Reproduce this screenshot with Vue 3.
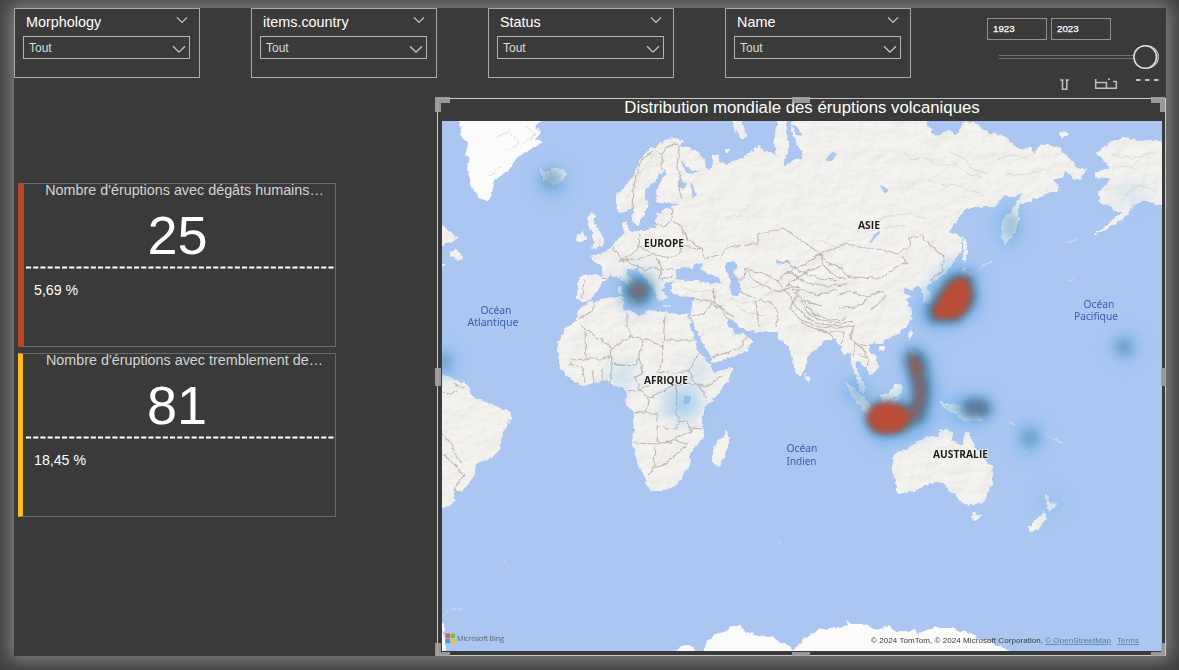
<script setup>
const slicers = ['Morphology', 'items.country', 'Status', 'Name']
const cards = [
  { title: "Nombre d'éruptions avec dégâts humains…", value: '25', pct: '5,69 %', tone: 'red' },
  { title: "Nombre d'éruptions avec tremblement de…", value: '81', pct: '18,45 %', tone: 'gold' },
]
const grips = ['tl', 't', 'tr', 'l', 'r', 'bl', 'b', 'br']

const land = [
  // Eurasia
  'M675 138L683 141 679 146 688 148 698 152 703 158 706 166 703 170 693 170 686 165 681 160 683 168 689 174 698 172 702 167 710 172 713 164 712 156 717 154 720 162 727 165 731 162 740 159 750 153 759 145 764 153 771 152 776 156 774 140 778 119L787 119 786 135 789 148 782 166 789 164 796 158 803 153 797 143 791 130 793 119L926 119 931 132 937 137 942 133 950 130 955 136 959 132 963 123 973 122 980 127 990 133 999 135 1008 138 1012 145 1023 150 1030 148 1035 153 1040 145 1053 145 1062 151 1067 155 1074 163 1077 168 1087 168 1083 175 1079 179 1073 178 1065 170 1063 177 1052 180 1057 184 1059 190 1047 193 1038 197 1033 200 1023 203 1018 207 1019 218 1015 232 1005 245 1001 233 1002 222 1010 212 1020 198 1023 192 1013 197 1003 196 997 205 977 208 967 208 958 218 948 232 957 235 962 238 962 248 953 263 945 273 937 279 927 287 932 297 930 303 924 303 923 292 920 286 915 287 912 291 905 288 902 294 912 296 905 300 908 305 912 310 912 318 905 328 897 335 883 340 881 344 873 343 868 347 873 355 878 362 878 368 870 375 867 368 862 365 859 360 856 363 857 371 863 380 865 393 860 390 857 380 852 365 850 353 843 355 841 347 835 338 830 340 825 340 815 350 807 357 805 368 800 376 795 370 792 357 789 347 783 342 778 338 779 332 760 332 747 330 740 328 732 320 725 317 728 324 732 330 737 335 743 333 747 336 753 342 745 352 730 357 713 363 711 355 703 343 693 323 690 316 693 305 694 298 683 297 672 293 671 285 675 281 665 283 662 290 667 297 660 302 655 292 648 282 637 268 628 269 626 273 633 281 644 289 641 293 639 298 634 291 626 283 618 277 610 276 602 282 597 290 590 300 582 303 577 298 579 277 590 275 603 276 602 267 590 257 597 255 605 252 613 245 620 238 625 232 622 225 627 221 628 232 645 231 655 228 657 215 663 210 672 207 680 204 668 203 658 203 656 195 660 182 667 174 666 170 659 174 655 181 645 190 645 200 648 206 643 215 638 225 633 222 632 208 625 213 617 210 616 195 625 187 634 175 640 160 648 150 658 145 666 140Z',
  // Africa
  'M593 303L607 298 622 297 624 303 622 308 627 311 643 316 648 310 663 312 677 314 687 314 691 322 689 324 695 340 697 350 710 365 713 372 732 368 730 378 717 395 705 407 702 420 704 437 697 445 690 453 690 463 680 480 670 489 652 492 647 483 638 463 632 443 634 430 634 413 625 403 627 392 622 387 613 385 607 380 595 382 583 386 568 377 559 365 559 357 558 343 567 327 577 320 578 310 590 302Z',
  // South America
  'M438 373L450 377 458 381 467 385 473 398 483 400 493 405 510 412 511 418 502 433 500 450 493 457 477 463 473 477 462 492 453 489 455 500 450 506 438 507Z',
  // Australia and Tasmania
  'M893 455L905 450 920 440 928 436 937 437 942 429 953 433 951 440 962 446 966 430 973 443 978 453 986 460 992 467 993 482 983 503 970 505 960 502 955 493 950 492 945 483 930 483 917 490 898 494 897 487 892 467ZM972 513L981 515 977 521 973 520Z',
  // Alaska
  'M1166 142L1148 140 1140 141 1123 137 1110 143 1097 153 1103 160 1110 168 1095 172 1095 178 1110 179 1104 187 1098 193 1100 202 1115 210 1123 212 1110 223 1092 236 1112 226 1128 214 1133 205 1147 200 1155 204 1166 205Z',
  // British Isles
  'M589 213L595 215 593 221 598 228 604 240 603 245 591 249 595 242 592 239 594 232 588 226ZM577 235L584 231 586 238 583 242 576 242Z',
  // Labrador, Newfoundland
  'M438 220L450 232 457 238 452 242 438 246ZM450 253L456 249 463 258 458 260 451 257ZM438 262L446 264 438 268Z',
  // Iceland, Svalbard, Novaya Zemlya, Wrangel
  'M540 169L545 172 553 169 563 170 566 175 562 181 552 184 544 180ZM733 119L742 119 744 130 747 138 742 139 736 132ZM725 149L729 149 728 152 725 152ZM1059 134L1065 131 1068 135 1062 137Z',
  // Mediterranean islands
  'M628 297L638 297 635 302ZM618 286L622 286 622 294 618 293ZM662 306L670 307 665 308Z',
  // Madagascar, Sri Lanka
  'M727 431L730 439 724 457 719 466 713 462 713 452 716 441 723 438ZM805 374L811 379 808 383 805 380Z',
  // Japan, Sakhalin, Hainan, Taiwan
  'M964 236L967 246 966 263 963 259 963 247ZM963 268L973 274 967 280 961 278ZM961 282L967 289 963 303 948 307 936 312 935 306 948 299 958 293ZM879 346L884 346 883 350 880 350ZM911 331L913 334 909 340 908 336Z',
  // Sumatra, Java, Borneo, Sulawesi, Philippines
  'M845 383L851 386 866 399 876 411 875 419 865 412 852 396ZM876 421L892 425 907 428 899 430 882 426ZM881 395L889 393 896 383 902 386 899 398 895 406 885 409ZM906 399L917 395 912 402 916 413 908 408 905 414ZM911 350L916 352 919 363 914 365ZM920 369L928 378 923 384 917 377Z',
  // New Guinea
  'M940 401L947 404 953 404 966 406 976 412 984 422 974 420 963 422 952 411 942 407Z',
  // New Zealand
  'M1045 494L1050 502 1057 504 1050 512 1047 508ZM1044 512L1047 515 1040 527 1032 532 1028 528 1035 521Z',
]

const ice =
  'M459 117L462 139 468 143 465 156 470 158 467 169 472 187 478 197 488 202 491 196 495 180 503 175 510 168 520 155 531 149 543 142 535 139 541 133 534 128 543 117ZM438 616L445 626 443 633 446 642 444 654 438 654ZM702 654L707 641 717 634 726 631 731 626 741 626 744 631 758 635 774 638 780 642 791 648 792 656 702 656ZM675 651L684 644 693 647 697 656 673 656ZM788 656L803 640 818 629 831 629 847 625 848 619 852 624 866 624 878 630 889 625 896 632 914 630 918 633 934 628 951 628 971 634 983 640 1000 646 1014 654Z'

const waters =
  'M676 278L677 270 683 267 693 268 695 264 704 263 700 269 713 275 723 282 712 284 700 281 688 281ZM725 263L734 261 738 267 733 272 740 282 740 294 734 296 729 289 731 280 725 271ZM871 242L879 234 880 230 874 235 868 243ZM679 179L686 184 685 189 679 187ZM694 187L697 195 693 198 689 184ZM776 262L790 260 790 262 777 264ZM825 160L833 151 837 153 829 162ZM880 186L889 190 885 194ZM791 145L795 151 803 156 797 160 789 154ZM790 124L797 127 802 135 796 134ZM684 397L691 396 690 404 683 404Z'

const borders = [
  'M641 160L637 172 633 187 632 210M641 160L654 151 662 153 667 147 676 143 680 150 677 165 681 178 679 190 682 198M662 153L662 170M672 208L671 221 663 227 654 223M671 221L681 226 687 240M640 233L639 247 635 252 620 261M612 248L619 255 624 261 640 259 652 254 665 257 676 257 683 246 702 249 704 257M639 247L650 252M624 261L637 266 645 270 652 267 660 269 675 270M657 258L662 271 660 280M662 280L673 276M682 229L688 239 703 250M584 280L582 298M603 277L616 279',
  'M704 259L722 254 727 247 757 244 758 235 783 228 798 238 812 247 820 254 806 263 788 272 778 281 763 273 745 269 744 279 730 279M820 254L845 244 866 247 883 250 897 255 909 246 910 237 922 236 931 246 945 257 942 270 930 281M820 254L827 262 843 269 849 277 881 278 892 270 907 263 902 256M820 254L823 265 836 277 846 278M745 269L755 281 777 291 790 288 801 291M777 281L785 289 791 282 810 270 822 266M740 292L754 297 757 308 759 327M759 300L771 302 779 314 776 328M712 289L716 302 724 314M690 299L706 300 716 303 733 317M692 316L705 312 712 303 720 309 728 319M712 357L729 352 741 347 746 338',
  'M800 289L790 308 801 320 819 327 838 328 854 325 850 338 858 345 872 346M801 322L813 329 829 332 835 340M829 332L845 332 841 344M849 334L855 343 853 356M858 345L866 352 869 365M857 355L868 358',
  'M579 319L592 311 596 303M580 325L607 344 612 348 632 336 627 325 627 311M585 332L586 359 570 360M632 336L643 339 663 346 665 314M665 340L694 340M643 339L639 357 635 366 612 364 611 348M586 359L603 359 612 354M663 346L662 364 658 371 675 373 690 370 698 355M639 357L643 372 635 378 640 389 658 381 672 382M612 364L610 382M602 368L604 383M592 369L594 384M569 364L582 367 585 384M614 365L635 366M627 392L641 390 649 398 646 410 635 413M649 398L676 384 688 383 701 387 706 397M676 384L677 397 676 410 680 421 675 429 658 426 657 413 634 413M633 443L659 444 673 440 684 434 692 432 688 422 676 421M658 426L658 443 673 442M655 446L654 466 648 475M654 468L666 463 679 452 687 444 672 440M690 370L694 383 706 387 722 376M702 428L690 427',
  'M459 493L454 488 464 475 456 466 442 453M442 433L450 441 453 451 462 463M453 384L459 388 466 386M442 391L449 394 458 390',
  'M883 406L891 399 901 395',
]

const relief = [
  'M786 260L799 271 815 277 837 281M788 270L803 282 822 286 847 285M799 300L807 312 821 321 842 323 852 321M802 300L814 314 830 320 846 319M785 285L800 288 818 295 837 290M835 296L850 291 867 297 883 291M840 308L857 307 868 300M870 310L880 303 886 294M784 288L795 305 807 318 820 324 842 326M792 290L806 301 821 306',
  'M730 298L744 304 758 302 767 294 781 289M736 305L749 314 765 315M680 286L695 291 710 290 720 295M747 289L760 286 771 279M725 218L739 215 750 205',
  'M925 158L939 165 955 165 969 174 982 178M927 180L944 185 960 186 982 195M950 152L963 157 972 169 989 174M995 160L1010 155 1026 159M1003 176L1026 174 1045 169M866 228L885 217 906 214 925 218M872 231L890 226 905 226M820 240L835 247 850 240M902 151L911 159 920 158M1115 165L1131 167 1142 158M1125 195L1140 185 1158 193M1112 155L1132 158 1154 153',
  'M497 137L510 131 519 143 507 151M490 177L502 165M526 126L536 135 523 143M625 198L633 188 640 173 655 154M944 407L958 409 974 416',
]

const labels = [
  { t: 'EUROPE', x: 644, y: 247, w: 40, c: 'cont' },
  { t: 'ASIE', x: 858, y: 229, w: 22, c: 'cont' },
  { t: 'AFRIQUE', x: 644, y: 384, w: 44, c: 'cont' },
  { t: 'AUSTRALIE', x: 933, y: 458, w: 55, c: 'cont' },
  { t: 'Océan', x: 480.5, y: 313.5, w: 31, c: 'sea' },
  { t: 'Atlantique', x: 467.5, y: 325.5, w: 51, c: 'sea' },
  { t: 'Océan', x: 786.5, y: 452, w: 31, c: 'sea' },
  { t: 'Indien', x: 786.5, y: 464.5, w: 30, c: 'sea' },
  { t: 'Océan', x: 1083.5, y: 308, w: 31, c: 'sea' },
  { t: 'Pacifique', x: 1074, y: 320, w: 44, c: 'sea' },
]
</script>

<template>
  <main class="screen">
    <section class="report">
      <header class="filters">
        <div v-for="name in slicers" :key="name" class="slicer">
          <div class="slicer-head">
            <span>{{ name }}</span>
            <svg width="12" height="8" viewBox="0 0 12 8"><path d="M1 1.4L6 6.4L11 1.4" /></svg>
          </div>
          <div class="select">
            <span>Tout</span>
            <svg width="14" height="9" viewBox="0 0 14 9"><path d="M1 1.2L7 7.2L13 1.2" /></svg>
          </div>
        </div>
        <div class="dates">
          <div class="years"><span>1923</span><span>2023</span></div>
          <svg class="slider" width="164" height="28" viewBox="0 0 164 28">
            <path d="M3 12.5H137M3 15.5H137" stroke="#707070" />
            <circle cx="151.2" cy="14" r="11.2" fill="#3a3a3a" stroke="#b8b8b8" stroke-width="1.2" />
            <circle cx="149.2" cy="14" r="11.3" fill="#3a3a3a" stroke="#dedede" stroke-width="1.6" />
          </svg>
        </div>
      </header>

      <div class="content">
        <aside class="cards">
          <article v-for="c in cards" :key="c.value" class="card" :class="c.tone">
            <h2>{{ c.title }}</h2>
            <div class="value">{{ c.value }}</div>
            <svg class="dash" width="310" height="3" viewBox="0 0 310 3">
              <path d="M2 1.5H310" stroke="#fff" stroke-width="2" stroke-dasharray="5.1 2.1" />
            </svg>
            <div class="pct">{{ c.pct }}</div>
          </article>
        </aside>

        <div class="visual">
          <div class="tools">
            <svg width="106" height="12" viewBox="0 0 106 12" fill="none" stroke="#c0c0c0">
              <path d="M6 2H9.5M11.5 2H15M8.5 1.5V11.2H12.8V1.5" stroke-width="1.6" />
              <path d="M41.7 1V10.2H62.3V3M42 4.5H52.5V10M54 1.2H56M59 3.5H62.5" stroke-width="1.5" />
              <path d="M82 2H86.5M91 2H95.5M100 2H104.5" stroke-width="2" />
            </svg>
          </div>
          <div class="frame">
            <h1>Distribution mondiale des éruptions volcaniques</h1>
            <svg class="map" width="720" height="530" viewBox="442 121 720 530">
              <defs>
                <filter id="coast" x="438" y="117" width="730" height="542" filterUnits="userSpaceOnUse">
                  <feTurbulence type="fractalNoise" baseFrequency=".22" numOctaves="2" seed="4" result="n" />
                  <feDisplacementMap in="SourceGraphic" in2="n" scale="5" xChannelSelector="R" yChannelSelector="G" result="shape" />
                  <feTurbulence type="fractalNoise" baseFrequency=".045 .07" numOctaves="4" seed="9" result="h" />
                  <feDiffuseLighting in="h" surfaceScale=".8" diffuseConstant="1.13" lighting-color="#fff" result="lit">
                    <feDistantLight azimuth="225" elevation="60" />
                  </feDiffuseLighting>
                  <feComposite in="lit" in2="shape" operator="in" result="shade" />
                  <feBlend in="shape" in2="shade" mode="multiply" />
                </filter>
                <filter id="jitter" x="438" y="117" width="730" height="542" filterUnits="userSpaceOnUse">
                  <feTurbulence type="fractalNoise" baseFrequency=".16" numOctaves="2" seed="7" />
                  <feDisplacementMap in="SourceGraphic" scale="5" xChannelSelector="R" yChannelSelector="G" />
                </filter>
                <filter id="b2" x="-60%" y="-60%" width="220%" height="220%"><feGaussianBlur stdDeviation="3" /></filter>
                <filter id="b5" x="-60%" y="-60%" width="220%" height="220%"><feGaussianBlur stdDeviation="5" /></filter>
                <filter id="b8" x="-60%" y="-60%" width="220%" height="220%"><feGaussianBlur stdDeviation="8" /></filter>
              </defs>
              <rect x="442" y="121" width="720" height="532" fill="#abc7f1" />
              <g filter="url(#coast)" fill="#f4f3f0">
                <path v-for="(d, i) in land" :key="i" :d="d" />
              </g>
              <g filter="url(#jitter)">
                <path :d="ice" fill="#fbfbfb" />
                <path :d="waters" fill="#abc7f1" />
                <path v-for="(d, i) in borders" :key="i" :d="d" fill="none" stroke="#bdb8b2" stroke-width="1.1" />
                <path v-for="(d, i) in relief" :key="'r' + i" :d="d" fill="none" stroke="#a9a9a6" :stroke-width="i === 0 ? 1.1 : 0.8" :opacity="i === 0 ? 0.8 : 0.4" />
                <path d="M442 617C448 610 454 608 462 608M504 562L511 566M777 542L781 544M1066 282L1074 278M1045 434L1062 443M1008 422L1015 425M1057 442L1063 441M1024 452L1028 456M980 268L992 261M1065 242L1078 240" fill="none" stroke="#d3e0f2" />
              </g>
              <g fill="#6cb4ec" filter="url(#b8)">
                <ellipse cx="552" cy="182" rx="16" ry="16" opacity=".5" />
                <ellipse cx="638" cy="290" rx="20" ry="20" opacity=".5" />
                <ellipse cx="682" cy="403" rx="18" ry="17" opacity=".5" />
                <ellipse cx="697" cy="370" rx="12" ry="10" opacity=".25" />
                <ellipse cx="622" cy="375" rx="15" ry="13" opacity=".25" />
                <ellipse cx="442" cy="362" rx="14" ry="16" opacity=".55" />
                <ellipse cx="1008" cy="226" rx="14" ry="23" opacity=".4" />
                <ellipse cx="1130" cy="195" rx="22" ry="12" opacity=".15" />
                <ellipse cx="857" cy="392" rx="16" ry="14" opacity=".55" />
                <ellipse cx="970" cy="410" rx="26" ry="18" opacity=".6" />
                <ellipse cx="1029" cy="438" rx="15" ry="18" opacity=".5" />
                <ellipse cx="1125" cy="347" rx="15" ry="15" opacity=".45" />
                <ellipse cx="1050" cy="503" rx="13" ry="14" opacity=".25" />
                <path d="M904 342L928 348 940 390 930 432 882 447 858 420 888 398 908 397Z" opacity=".7" />
                <path d="M918 303L951 263 981 273 980 314 944 332 918 322Z" opacity=".7" />
              </g>
              <g fill="#47718f" filter="url(#b5)">
                <path d="M926 309L949 276 971 271 977 300 960 322 930 323Z" opacity=".95" />
                <path d="M903 355L915 348 926 357 931 390 926 419 900 434 874 435 865 418 876 401 904 404 914 396Z" opacity=".9" />
                <circle cx="638" cy="291" r="14" opacity=".85" />
                <ellipse cx="976" cy="408" rx="16" ry="10" opacity=".8" />
                <circle cx="1030" cy="438" r="9" opacity=".38" />
                <circle cx="1124" cy="347" r="9" opacity=".42" />
                <circle cx="551" cy="179" r="10" opacity=".35" />
                <ellipse cx="444" cy="362" rx="7" ry="9" opacity=".35" />
                <ellipse cx="1011" cy="226" rx="6" ry="15" opacity=".25" />
                <path d="M848 383L858 386 872 406 866 412Z" opacity=".3" />
              </g>
              <g fill="#b94e35" filter="url(#b2)">
                <path d="M932 312L941 294 954 279 967 278 972 294 967 311 954 319 938 319Z" />
                <ellipse cx="888" cy="418" rx="21" ry="15.5" />
                <path d="M908 355L918 358 923 378 925 400 918 419 903 426 904 414 915 402 914 381Z" opacity=".45" />
                <ellipse cx="916" cy="366" rx="5" ry="10" transform="rotate(-10 916 366)" opacity=".35" />
                <circle cx="639" cy="291" r="6" opacity=".45" />
                <ellipse cx="977" cy="409" rx="6" ry="4" opacity=".15" />
              </g>
              <text v-for="(l, i) in labels" :key="'l' + i" :x="l.x" :y="l.y" :textLength="l.w" lengthAdjust="spacingAndGlyphs" :class="l.c">{{ l.t }}</text>
              <g class="bing">
                <path d="M445.5 633.5H450V638H445.5Z" fill="#ee5b35" /><path d="M450.7 633.5H455.2V638H450.7Z" fill="#7fbb42" />
                <path d="M445.5 638.7H450V643.2H445.5Z" fill="#2d9fe5" /><path d="M450.7 638.7H455.2V643.2H450.7Z" fill="#f5bd32" />
                <text x="457" y="641.3" textLength="47">Microsoft Bing</text>
              </g>
              <g class="credit">
                <text x="871" y="643" textLength="172">© 2024 TomTom, © 2024 Microsoft Corporation,</text>
                <text x="1045" y="643" textLength="66" class="link">© OpenStreetMap</text>
                <text x="1117" y="643" textLength="22" class="link">Terms</text>
              </g>
            </svg>
            <i v-for="g in grips" :key="g" class="grip" :class="g"></i>
          </div>
        </div>
      </div>
    </section>
  </main>
</template>

<style>
body { background: #3f3f3f; overflow: hidden; }
</style>

<style scoped>
.screen { box-sizing: border-box; width: 1179px; height: 670px; padding: 8px 13px 14px 14px; overflow: hidden; background: #3f3f3f; font-family: "Liberation Sans", Arial, sans-serif; }
.report { width: 1152px; height: 648px; background: #3a3a3a; box-shadow: 0 0 17px 4px #868686; }
svg { display: block; }
.filters { display: flex; gap: 51px; height: 70px; }
.slicer { box-sizing: border-box; width: 186px; height: 70px; border: 1px solid #a9a9a9; padding: 5px 9px 0 8px; }
.slicer-head { display: flex; justify-content: space-between; height: 22px; padding-left: 3px; color: #fff; font-size: 14.4px; line-height: 17px; }
.slicer-head svg { margin: 2px 2px 0 0; }
.slicer svg path { fill: none; stroke: #c8c8c8; stroke-width: 1.3; }
.select { box-sizing: border-box; display: flex; justify-content: space-between; width: 167px; height: 23px; border: 1px solid #b4b4b4; padding: 0 3px 0 5px; color: #dcdcdc; font-size: 12px; line-height: 23px; }
.select svg { margin-top: 8px; }
.dates { width: 178px; margin-left: 25px; padding-top: 10px; }
.years { display: flex; gap: 4px; }
.years span { box-sizing: border-box; width: 60px; height: 22px; border: 1px solid #8f8f8f; padding-left: 5px; color: #fff; font-size: 9.7px; line-height: 20px; -webkit-text-stroke: .25px #fff; }
.slider { margin: 3px 0 0 9px; }
.content { display: flex; justify-content: space-between; height: 578px; }
.cards { display: flex; flex-direction: column; gap: 6px; padding: 105px 0 0 4px; }
.card { box-sizing: border-box; width: 318px; height: 164px; border: 1px solid #6b6b6b; border-left: 6px solid #b64426; }
.gold { border-left: 5px solid #fbbb21; }
.gold .dash { margin-left: 1px; }
h2 { margin: 0; padding-left: 10px; color: #d4d4d4; font-size: 14.35px; line-height: 12px; height: 20px; font-weight: 400; text-align: center; white-space: nowrap; }
.gold h2 { padding-left: 11px; }
.value { height: 62px; padding-right: 4px; color: #fff; font-size: 54px; line-height: 63px; text-align: center; }
.pct { padding: 14px 0 0 10px; color: #fff; font-size: 14.2px; line-height: 15px; }
.gold .pct { padding-left: 11px; }
.visual { width: 729px; }
.tools { display: flex; justify-content: flex-end; height: 20px; padding: 0 6px 0 0; box-sizing: border-box; }
.frame { position: relative; box-sizing: border-box; width: 729px; height: 558px; border: 1px solid #c9c9c9; padding-left: 4px; background: #3a3a3a; }
h1 { width: 720px; height: 22px; margin: 0; color: #fff; font-size: 16.8px; line-height: 17px; font-weight: 400; text-align: center; white-space: nowrap; }
.cont { font: 700 10px "Open Sans", "Noto Sans", sans-serif; fill: #1c1c1c; stroke: #f4f3f0; stroke-width: 1.4px; paint-order: stroke; }
.sea { font: 10px "Noto Sans", sans-serif; fill: #3a5cb4; }
.bing { font: 7.5px "Open Sans", sans-serif; fill: #606a78; }
.credit { font: 8px "Liberation Sans", Arial, sans-serif; fill: #3b3b3b; }
.link { fill: #5678ad; text-decoration: underline; }
.grip { position: absolute; box-sizing: border-box; border: 0 solid #a3a3a3; opacity: .9; }
.tl { left: -3px; top: -2px; width: 15px; height: 15px; border-width: 6px 0 0 6px; }
.tr { right: 0; top: -2px; width: 14px; height: 15px; border-width: 6px 5px 0 0; }
.bl { left: -3px; bottom: -1px; width: 15px; height: 13px; border-width: 0 0 4px 6px; }
.br { right: 0; bottom: -1px; width: 14px; height: 13px; border-width: 0 4px 4px 0; }
.t, .b { left: 354px; width: 18px; height: 6px; background: #a3a3a3; }
.t { top: -2px; }
.b { bottom: -1px; height: 4px; }
.l, .r { top: 269px; width: 6px; height: 18px; background: #a3a3a3; }
.l { left: -3px; }
.r { right: -1px; width: 5px; }
</style>
